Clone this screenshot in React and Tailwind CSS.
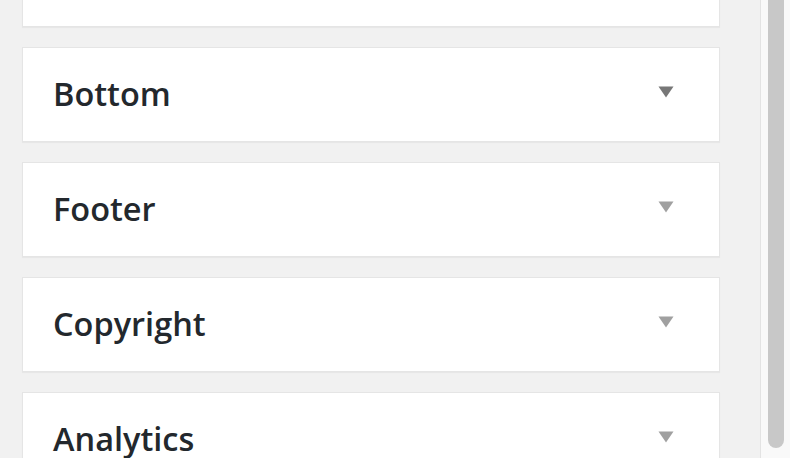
import React from "react";

function Arrow({ dark }) {
  return (
    <svg width="16" height="12" viewBox="0 0 16 12" className="mb-[6px] mr-[45px] shrink-0">
      <polygon points="0.5,0.5 15.5,0.5 8,11.5" fill={dark ? "#777777" : "#a0a0a0"} />
    </svg>
  );
}

function Card({ title, dark }) {
  return (
    <div className="flex h-[95px] items-center justify-between border border-[#e5e5e5] bg-white shadow-[0_1px_1px_rgba(0,0,0,0.04)]">
      <span className="pl-[30px] text-[32.5px] font-semibold leading-none text-[#23282d]" style={{ fontFamily: '"Open Sans", sans-serif' }}>
        {title}
      </span>
      {title && <Arrow dark={dark} />}
    </div>
  );
}

export default function App() {
  return (
    <div className="flex h-[458px] w-[790px] overflow-hidden bg-[#f1f1f1]">
      <div className="w-[760px] shrink-0 pl-[22px] pr-[40px]">
        <div className="-mt-[68px] flex flex-col gap-[20px]">
          <Card title="" />
          <Card title="Bottom" dark />
          <Card title="Footer" />
          <Card title="Copyright" />
          <Card title="Analytics" />
        </div>
      </div>
      <div className="flex h-full flex-1 border-l border-[#e3e3e3] bg-[#f9f9f9] pl-[7px] pt-0">
        <div className="h-[448px] w-[16px] rounded-b-[8px] bg-[#c8c8c8]" />
      </div>
    </div>
  );
}
